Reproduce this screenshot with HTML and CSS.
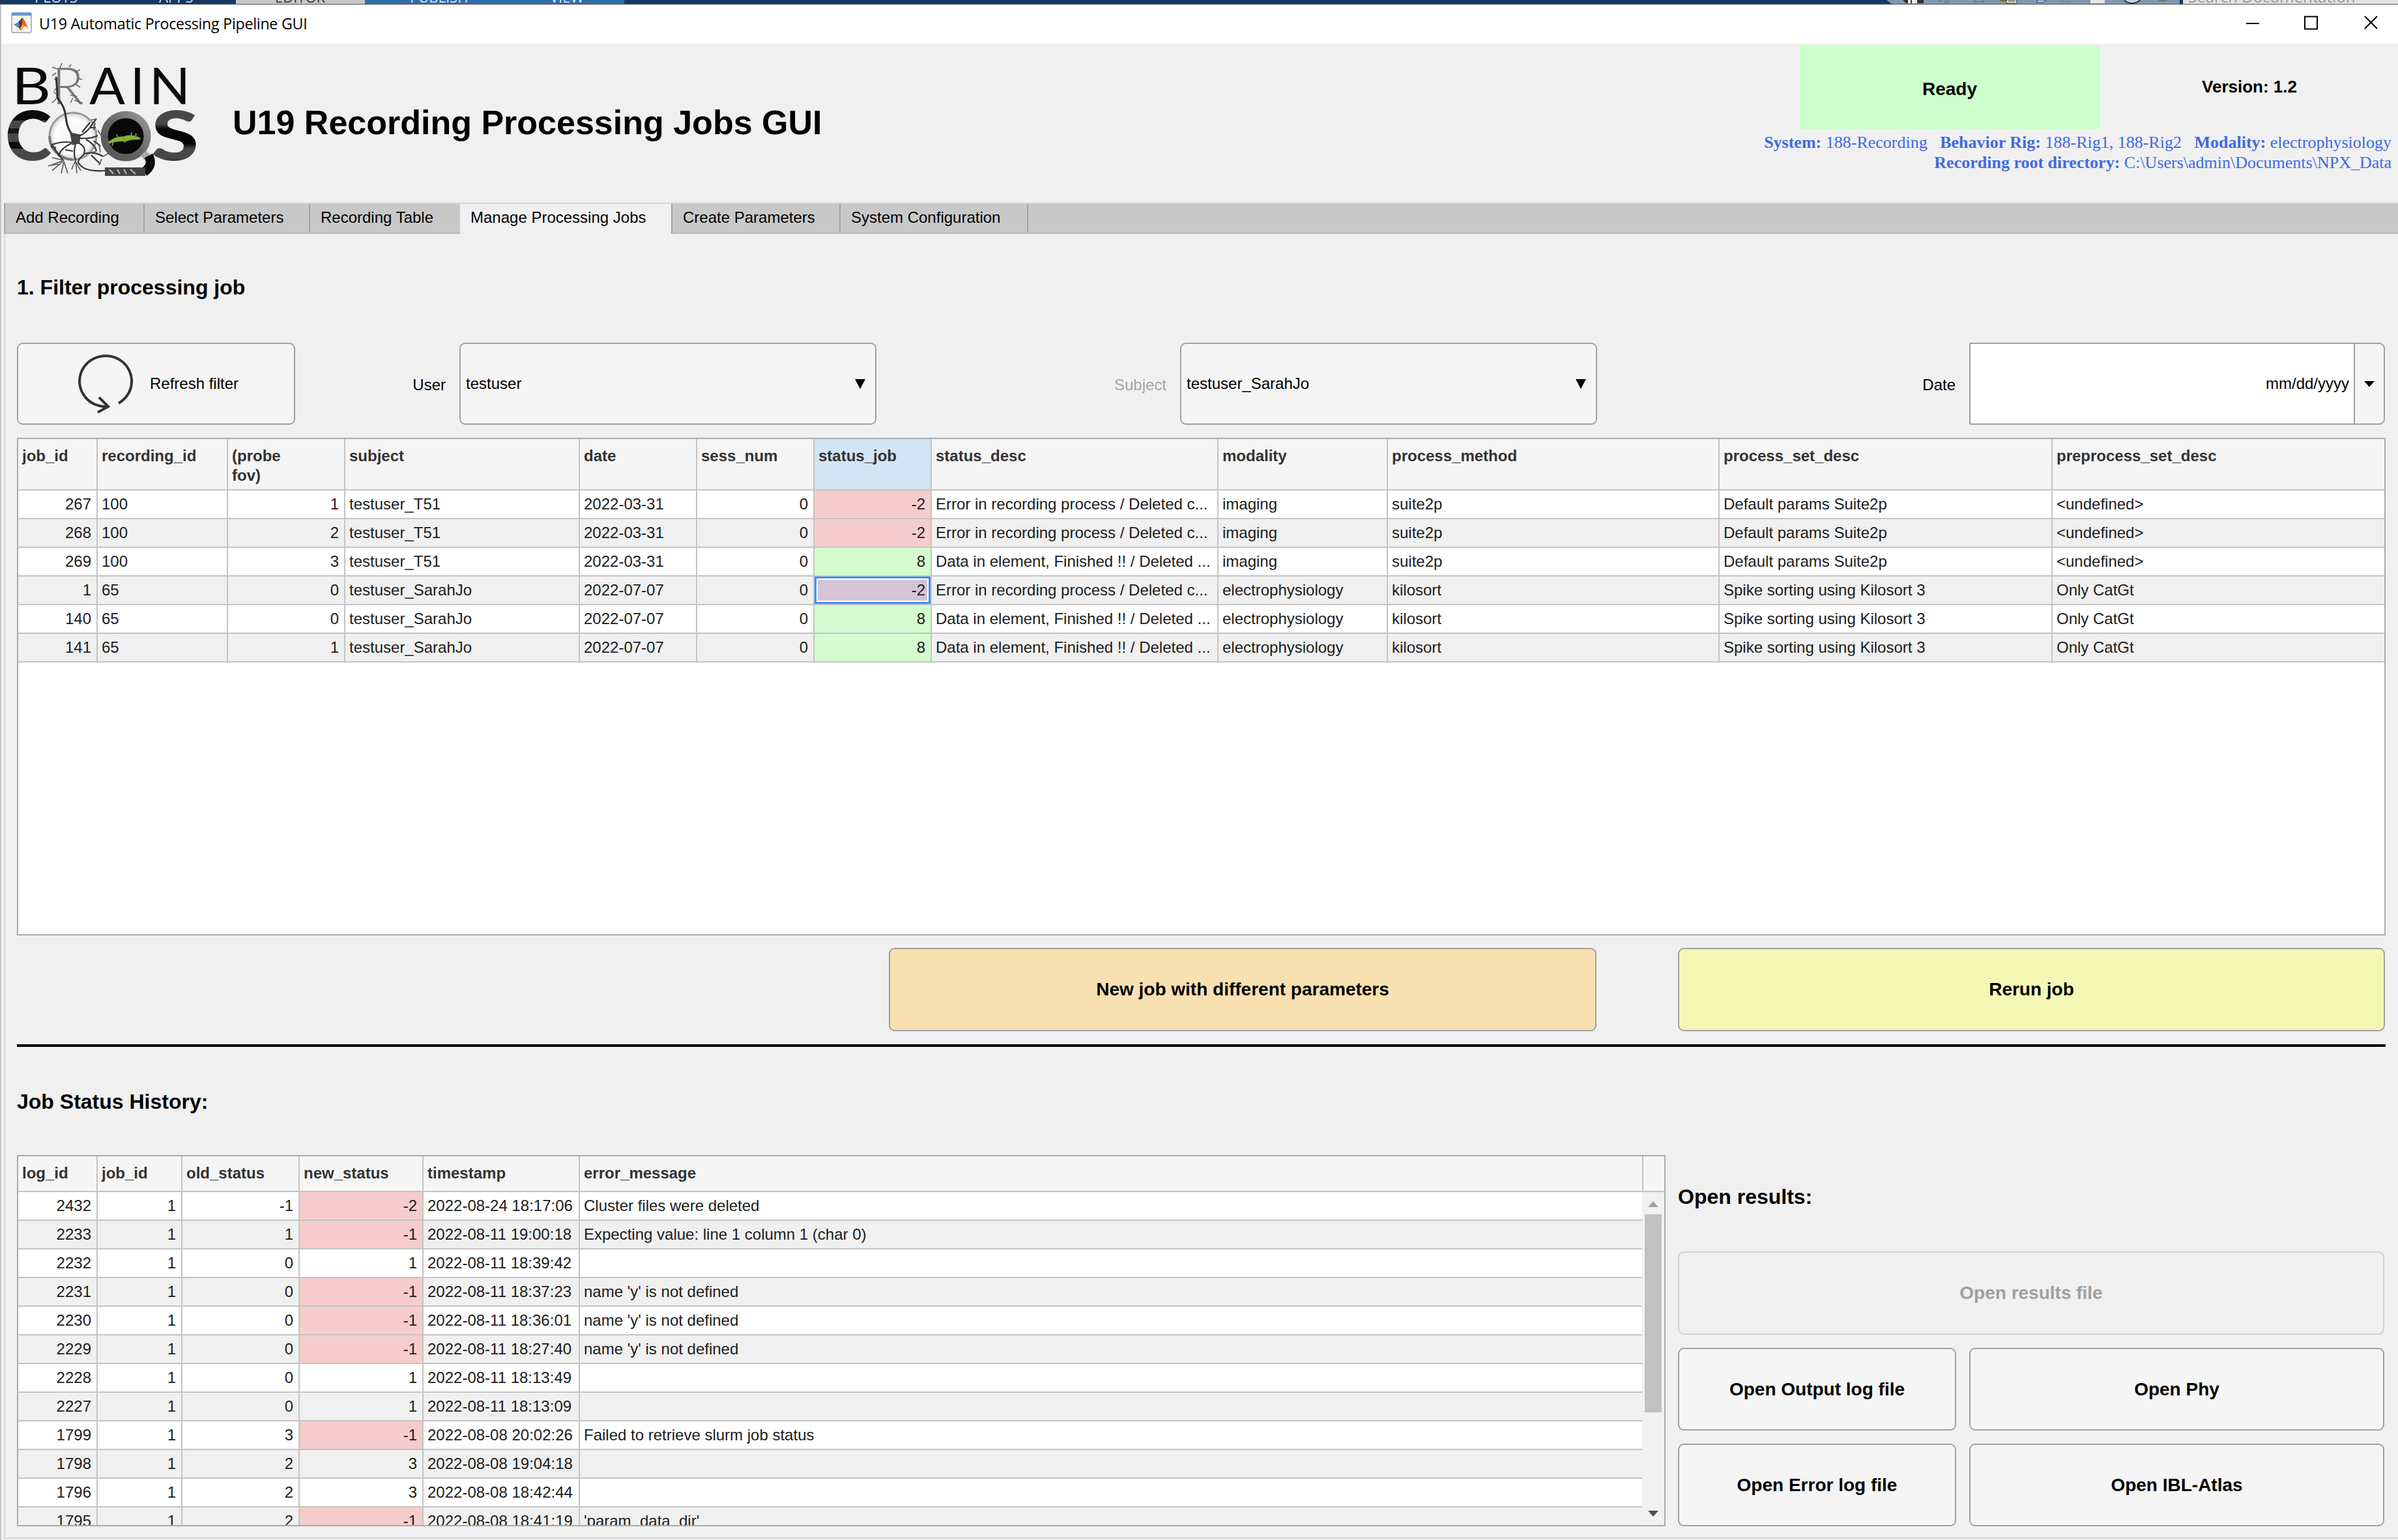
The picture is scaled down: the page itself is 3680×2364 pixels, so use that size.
FILE: index.html
```html
<!DOCTYPE html>
<html lang="en">
<head>
<meta charset="utf-8">
<title>U19 Automatic Processing Pipeline GUI</title>
<link rel="stylesheet" href="styles.css">
</head>
<body>
<div class="backdrop">
  <span class="bd bd-plots">PLOTS</span><span class="bd bd-apps">APPS</span><span class="bd bd-editor">EDITOR</span><span class="bd bd-publish">PUBLISH</span><span class="bd bd-view">VIEW</span><span class="bd bd-fill"></span>
  <svg class="bd-tools" width="455" height="6" viewBox="2895 0 455 6"><path d="M2895 0H3345V6H2903Z" fill="#8098b0"/><path d="M2920 0H2952V5H2925Z" fill="#333"/><path d="M2928 0h4v5h-4zM2934 0h8v5h-8z" fill="#e8e8e8"/><path d="M3030 0v3h14V0M2975 0q2 4 6 0M2985 0v4h5V0" fill="none" stroke="#6c8095" stroke-width="2"/><path d="M3068 0h12v2h-9z" fill="#7d6024"/><path d="M3079 0h16v5h-16z" fill="#e9efe6" stroke="#333"/><path d="M3082 2h10" stroke="#333"/><path d="M3126 0v4h9l6-4z" fill="#a8cdf5" stroke="#273f63"/><path d="M3162 0q4 4 14 3V0" fill="none" stroke="#6c8095"/><path d="M3208 0h22v5h-22z" fill="#e6e6e6"/><path d="M3260 0q4 5 12 5t12-5" fill="#c8d4e2" stroke="#222a3a" stroke-width="2"/><path d="M3310 0q8 5 18 0" fill="#777"/><path d="M3345 0h5v6h-5z" fill="#143865"/></svg>
  <span class="bd bd-search">Search Documentation</span>
</div>

<div class="window">
<div class="titlebar">
  <svg class="app-icon" width="32" height="32" viewBox="0 0 32 32"><rect x="1" y="1" width="30" height="30" rx="2" fill="#f2f4f6" stroke="#b4b8bc" stroke-width="2"/><rect x="1" y="0" width="30" height="5" fill="#6b9ac8"/><path d="M4 19L11 15L14 22L10 23Z" fill="#4a8fc4"/><path d="M11 15Q14 12 17 8L19 14L14 22Z" fill="#27406e"/><path d="M14 22Q17 11 18 8Q22 14 26 24L21 21L15 28L11 22Z" fill="#df6a1d"/><path d="M17 9Q16 18 11 22L15 28L17 24Z" fill="#8e2b18"/><path d="M18 18L21 21L15 28L14 24Z" fill="#f4ae3d"/></svg>
  <span class="window-title">U19 Automatic Processing Pipeline GUI</span>
  <svg class="window-buttons" width="206" height="22" viewBox="0 0 206 22" fill="none" stroke="#000" stroke-width="2"><path d="M1 12H21"/><rect x="91" y="1.5" width="19" height="19"/><path d="M183 1L202 20M202 1L183 20"/></svg>
</div>

<header class="header">
  <svg class="logo" width="310" height="190" viewBox="0 90 310 190">
    <defs>
      <linearGradient id="band-c" x1="0" y1="0" x2="0" y2="1"><stop offset="0" stop-color="#484848"/><stop offset=".2" stop-color="#484848"/><stop offset=".2" stop-color="#0a0a0a"/><stop offset=".34" stop-color="#0a0a0a"/><stop offset=".34" stop-color="#484848"/><stop offset=".43" stop-color="#484848"/><stop offset=".43" stop-color="#151515"/><stop offset=".5" stop-color="#151515"/><stop offset=".5" stop-color="#484848"/><stop offset=".6" stop-color="#484848"/><stop offset=".6" stop-color="#0a0a0a"/><stop offset=".68" stop-color="#0a0a0a"/><stop offset=".68" stop-color="#484848"/></linearGradient>
      <linearGradient id="band-s" x1="0" y1="0" x2="0" y2="1"><stop offset="0" stop-color="#484848"/><stop offset=".38" stop-color="#484848"/><stop offset=".44" stop-color="#050505"/><stop offset=".62" stop-color="#050505"/><stop offset=".68" stop-color="#484848"/><stop offset=".8" stop-color="#484848"/><stop offset=".86" stop-color="#111"/></linearGradient>
      <radialGradient id="cell"><stop offset="0" stop-color="#f4f4f4"/><stop offset=".75" stop-color="#fff"/><stop offset="1" stop-color="#d0d0d0"/></radialGradient>
      <linearGradient id="lens" x1="0" y1="1" x2="1" y2="0"><stop offset="0" stop-color="#555"/><stop offset=".5" stop-color="#666"/><stop offset="1" stop-color="#999"/></linearGradient>
    </defs>
    <g font-family="Lato, sans-serif" font-size="78" fill="#0a0a0a">
      <text x="18" y="160" textLength="60" lengthAdjust="spacingAndGlyphs">B</text>
      <text x="80" y="160" fill="#777" font-weight="300" textLength="48" lengthAdjust="spacingAndGlyphs">R</text>
      <text x="137" y="160" textLength="55" lengthAdjust="spacingAndGlyphs">A</text>
      <text x="200" y="160">I</text>
      <text x="229" y="160" textLength="63" lengthAdjust="spacingAndGlyphs">N</text>
    </g>
    <path d="M88 106l-8 -3M86 112l-6 4M90 122l-7 0M88 134l-5 5M92 104l3 -7M106 103l3 -4M116 110l7 -3M119 120l7 2M117 130l6 4M108 146l10 2M114 154l13 4M112 150l-4 8M88 150l-8 8M88 146l-6 -5" stroke="#666" stroke-width="1.6" fill="none"/>
    <text x="8" y="246" font-family="Lato, sans-serif" font-weight="900" font-size="104" fill="url(#band-c)" textLength="71" lengthAdjust="spacingAndGlyphs">C</text>
    <text x="232" y="246" font-family="Lato, sans-serif" font-weight="900" font-size="104" fill="url(#band-s)" textLength="73" lengthAdjust="spacingAndGlyphs">S</text>
    <circle cx="112" cy="209" r="36" fill="url(#cell)" stroke="#9a9a9a" stroke-width="3"/>
    <path d="M76 209A36 36 0 0 0 112 245" fill="none" stroke="#777" stroke-width="4"/>
    <path d="M86 118Q88 138 88 150Q100 164 101 180Q103 200 114 210" fill="none" stroke="#333" stroke-width="3"/>
    <path d="M109 205L122 208L121 219L112 221Z" fill="#444" stroke="#444" stroke-width="3"/>
    <g fill="none" stroke="#333" stroke-width="2.2">
      <path d="M112 219Q96 216 80 222Q88 236 98 247M110 220Q92 228 90 240M116 220Q112 236 116 246M120 219Q134 226 128 238Q116 248 122 252Q130 264 161 262M121 209Q134 204 142 190M122 212Q138 214 150 208M132 214Q146 222 148 232M126 203L138 188M142 190l6 -8M137 196l10 0M130 236Q144 232 158 240M140 238l14 14M144 216l10 8M100 230L112 232M86 227l-8 -2"/>
    </g>
    <path d="M98 246l-18 -4M96 247l-22 8M96 248l-16 14M98 248l-4 18M98 248l6 18M90 252l-14 2M116 246l-6 14M116 246l2 20M116 248l8 14M140 184l8 -1M146 188l-2 12M150 200l8 12M158 240l8 -4M156 244l-4 10M148 232l-12 4M152 222l2 12" fill="none" stroke="#555" stroke-width="1.6"/>
    <circle cx="193" cy="209" r="33" fill="#090909" stroke="url(#lens)" stroke-width="11"/>
    <path d="M167 219Q178 210 190 211Q200 206 215 213Q200 212 193 216Q182 214 167 219Z" fill="#83b33c" stroke="#83b33c" stroke-width="3"/>
    <path d="M174 217l-2 7M181 212l-2 -6M192 213l-1 6M201 210l1 -7M207 211l2 -6" stroke="#6d9a2e" stroke-width="2"/>
    <path d="M220 235L228 244" stroke="#aaa" stroke-width="12"/>
    <path d="M228 239Q236 254 221 264" fill="none" stroke="#0a0a0a" stroke-width="14"/>
    <rect x="161" y="257" width="62" height="13" fill="#444"/>
    <path d="M168 260l6 7M180 260l4 7M190 260l4 7M200 260l8 7" stroke="#bbb" stroke-width="2"/>
  </svg>
  <h1 class="app-title">U19 Recording Processing Jobs GUI</h1>
  <div class="header-info">
    <div class="status-line">
      <div class="status-ready">Ready</div>
      <div class="version">Version: 1.2</div>
    </div>
    <div class="system-info"><b>System:</b> 188-Recording &nbsp; <b>Behavior Rig:</b> 188-Rig1, 188-Rig2 &nbsp; <b>Modality:</b> electrophysiology<br><b>Recording root directory:</b> C:\Users\admin\Documents\NPX_Data</div>
  </div>
</header>

<nav class="tabs">
  <div class="tab tab-add">Add Recording</div>
  <div class="tab tab-select">Select Parameters</div>
  <div class="tab tab-table">Recording Table</div>
  <div class="tab tab-manage active">Manage Processing Jobs</div>
  <div class="tab tab-create">Create Parameters</div>
  <div class="tab tab-config">System Configuration</div>
</nav>

<main class="page">
  <h2 class="section-title">1. Filter processing job</h2>

  <div class="filters">
    <button class="button refresh"><svg width="86" height="92" viewBox="0 0 86 92" fill="none" stroke="#333" stroke-width="4"><path d="M64 76A40 39 0 1 0 48 81M34 67L48 81L32 90"/></svg><span>Refresh filter</span></button>
    <label class="filter-label">User</label>
    <div class="select"><span>testuser</span><svg width="16" height="15" viewBox="0 0 16 15"><path d="M0 0H16L8 15Z"/></svg></div>
    <label class="filter-label disabled">Subject</label>
    <div class="select"><span>testuser_SarahJo</span><svg width="16" height="15" viewBox="0 0 16 15"><path d="M0 0H16L8 15Z"/></svg></div>
    <label class="filter-label">Date</label>
    <div class="date"><div class="date-value">mm/dd/yyyy</div><div class="date-drop"><svg width="16" height="9" viewBox="0 0 16 9"><path d="M0 0H16L8 9Z"/></svg></div></div>
  </div>

  <div class="jobs">
    <table class="grid jobs-grid">
      <colgroup><col class="w122"><col class="w200"><col class="w180"><col class="w360"><col class="w180"><col class="w180"><col class="w180"><col class="w440"><col class="w260"><col class="w509"><col class="w511"><col class="w509"></colgroup>
      <thead><tr><th>job_id</th><th>recording_id</th><th>(probe<br>fov)</th><th>subject</th><th>date</th><th>sess_num</th><th class="picked">status_job</th><th>status_desc</th><th>modality</th><th>process_method</th><th>process_set_desc</th><th>preprocess_set_desc</th></tr></thead>
      <tbody>
      <tr><td class="num">267</td><td>100</td><td class="num">1</td><td>testuser_T51</td><td>2022-03-31</td><td class="num">0</td><td class="num bad">-2</td><td>Error in recording process / Deleted c...</td><td>imaging</td><td>suite2p</td><td>Default params Suite2p</td><td>&lt;undefined&gt;</td></tr>
      <tr><td class="num">268</td><td>100</td><td class="num">2</td><td>testuser_T51</td><td>2022-03-31</td><td class="num">0</td><td class="num bad">-2</td><td>Error in recording process / Deleted c...</td><td>imaging</td><td>suite2p</td><td>Default params Suite2p</td><td>&lt;undefined&gt;</td></tr>
      <tr><td class="num">269</td><td>100</td><td class="num">3</td><td>testuser_T51</td><td>2022-03-31</td><td class="num">0</td><td class="num good">8</td><td>Data in element, Finished !! / Deleted ...</td><td>imaging</td><td>suite2p</td><td>Default params Suite2p</td><td>&lt;undefined&gt;</td></tr>
      <tr><td class="num">1</td><td>65</td><td class="num">0</td><td>testuser_SarahJo</td><td>2022-07-07</td><td class="num">0</td><td class="num selected">-2</td><td>Error in recording process / Deleted c...</td><td>electrophysiology</td><td>kilosort</td><td>Spike sorting using Kilosort 3</td><td>Only CatGt</td></tr>
      <tr><td class="num">140</td><td>65</td><td class="num">0</td><td>testuser_SarahJo</td><td>2022-07-07</td><td class="num">0</td><td class="num good">8</td><td>Data in element, Finished !! / Deleted ...</td><td>electrophysiology</td><td>kilosort</td><td>Spike sorting using Kilosort 3</td><td>Only CatGt</td></tr>
      <tr><td class="num">141</td><td>65</td><td class="num">1</td><td>testuser_SarahJo</td><td>2022-07-07</td><td class="num">0</td><td class="num good">8</td><td>Data in element, Finished !! / Deleted ...</td><td>electrophysiology</td><td>kilosort</td><td>Spike sorting using Kilosort 3</td><td>Only CatGt</td></tr>
      </tbody>
    </table>
  </div>

  <div class="job-actions">
    <button class="button strong orange">New job with different parameters</button>
    <button class="button strong yellow">Rerun job</button>
  </div>

  <div class="divider"></div>

  <h2 class="section-title history-title">Job Status History:</h2>

  <div class="lower">
    <div class="log">
      <table class="grid log-grid">
        <colgroup><col class="w122"><col class="w130"><col class="w180"><col class="w190"><col class="w240"><col class="w1630"></colgroup>
        <thead><tr><th>log_id</th><th>job_id</th><th>old_status</th><th>new_status</th><th>timestamp</th><th>error_message</th></tr></thead>
        <tbody>
        <tr><td class="num">2432</td><td class="num">1</td><td class="num">-1</td><td class="num bad">-2</td><td>2022-08-24 18:17:06</td><td>Cluster files were deleted</td></tr>
        <tr><td class="num">2233</td><td class="num">1</td><td class="num">1</td><td class="num bad">-1</td><td>2022-08-11 19:00:18</td><td>Expecting value: line 1 column 1 (char 0)</td></tr>
        <tr><td class="num">2232</td><td class="num">1</td><td class="num">0</td><td class="num">1</td><td>2022-08-11 18:39:42</td><td></td></tr>
        <tr><td class="num">2231</td><td class="num">1</td><td class="num">0</td><td class="num bad">-1</td><td>2022-08-11 18:37:23</td><td>name 'y' is not defined</td></tr>
        <tr><td class="num">2230</td><td class="num">1</td><td class="num">0</td><td class="num bad">-1</td><td>2022-08-11 18:36:01</td><td>name 'y' is not defined</td></tr>
        <tr><td class="num">2229</td><td class="num">1</td><td class="num">0</td><td class="num bad">-1</td><td>2022-08-11 18:27:40</td><td>name 'y' is not defined</td></tr>
        <tr><td class="num">2228</td><td class="num">1</td><td class="num">0</td><td class="num">1</td><td>2022-08-11 18:13:49</td><td></td></tr>
        <tr><td class="num">2227</td><td class="num">1</td><td class="num">0</td><td class="num">1</td><td>2022-08-11 18:13:09</td><td></td></tr>
        <tr><td class="num">1799</td><td class="num">1</td><td class="num">3</td><td class="num bad">-1</td><td>2022-08-08 20:02:26</td><td>Failed to retrieve slurm job status</td></tr>
        <tr><td class="num">1798</td><td class="num">1</td><td class="num">2</td><td class="num">3</td><td>2022-08-08 19:04:18</td><td></td></tr>
        <tr><td class="num">1796</td><td class="num">1</td><td class="num">2</td><td class="num">3</td><td>2022-08-08 18:42:44</td><td></td></tr>
        <tr><td class="num">1795</td><td class="num">1</td><td class="num">2</td><td class="num bad">-1</td><td>2022-08-08 18:41:19</td><td>'param_data_dir'</td></tr>
        </tbody>
      </table>
      <div class="scroll">
        <div class="scroll-head"></div>
        <div class="scroll-track">
          <svg width="16" height="9" viewBox="0 0 16 9"><path d="M0 9H16L8 0Z" fill="#a3a3a3"/></svg>
          <div class="scroll-thumb"></div>
          <svg width="16" height="9" viewBox="0 0 16 9"><path d="M0 0H16L8 9Z" fill="#505050"/></svg>
        </div>
      </div>
    </div>
    <section class="results">
      <h2 class="section-title results-title">Open results:</h2>
      <div class="results-buttons">
        <button class="button strong wide" disabled>Open results file</button>
        <button class="button strong">Open Output log file</button>
        <button class="button strong">Open Phy</button>
        <button class="button strong">Open Error log file</button>
        <button class="button strong">Open IBL-Atlas</button>
      </div>
    </section>
  </div>
</main>
</div>
</body>
</html>
```

FILE: styles.css
```css
* { box-sizing: border-box; }

html, body { height: 2364px; overflow: hidden; }

body {
  margin: 0;
  width: 3680px;
  background: #f0f0f0;
  color: #000;
  font: 24px/30px "Liberation Sans", Arial, sans-serif;
}

/* Strip of the window behind */
.backdrop {
  display: flex;
  height: 7px;
  overflow: hidden;
  background: #143865;
  border-bottom: 1px solid #555;
}
.bd {
  flex: none;
  height: 30px;
  margin-top: -20px;
  color: #dde3ea;
  font: 22px/30px "Open Sans", sans-serif;
}
.bd-plots { width: 244px; padding-left: 53px; }
.bd-apps { width: 118px; }
.bd-editor { width: 198px; padding-left: 60px; color: #333; background: #c8c8c8; }
.bd-publish { width: 284px; padding-left: 69px; background: #2f6eac; }
.bd-view { width: 114px; background: #2f6eac; }
.bd-fill { width: 1937px; }
.bd-tools { flex: none; display: block; }
.bd-search { width: 330px; padding-left: 8px; color: #999; background: #e2e2e2; font-size: 24px; white-space: nowrap; }

.window { height: 2357px; border-left: 2px solid #c4c4c4; background: #f0f0f0; }

.titlebar {
  display: flex;
  align-items: center;
  height: 60px;
  padding: 0 28px 0 15px;
  background: #fff;
}
.app-icon { margin-top: -4px; }
.window-title {
  margin: -3px 0 0 11px;
  font: 23.2px/30px "Open Sans", sans-serif;
  letter-spacing: -0.25px;
  white-space: nowrap;
}
.window-buttons { margin: -5px 0 0 auto; }

.header { display: flex; height: 244px; }
.logo { flex: none; margin: 23px 0 0 -2px; }
.app-title {
  margin: 90px 0 0 47px;
  font-size: 52px;
  line-height: 62px;
  font-weight: bold;
  white-space: nowrap;
}
.header-info { width: 1000px; margin-left: auto; padding: 3px 10px 0 0; }
.status-line { display: flex; justify-content: flex-end; height: 128px; }
.status-ready {
  width: 460px;
  padding-top: 3px;
  background: #ccffcc;
  font-size: 28px;
  font-weight: bold;
  line-height: 128px;
  text-align: center;
}
.version { width: 448px; padding-right: -10px; font-size: 26px; font-weight: bold; line-height: 126px; text-align: center; text-indent: 12px; }
.system-info {
  margin-top: 5px;
  color: #4169e1;
  font: 26px/31px "Liberation Serif", "Times New Roman", serif;
  text-align: right;
  white-space: nowrap;
}

.tabs {
  display: flex;
  height: 48px;
  margin-left: 4px;
  background: #c8c8c8;
  border-top: 2px solid #d4d4d4;
  border-bottom: 2px solid #b8b8b8;
  border-left: 2px solid #a8a8a8;
}
.tab { height: 44px; padding-left: 16px; border-right: 2px solid #a4a4a4; line-height: 42px; white-space: nowrap; }
.tab-add { width: 214px; }
.tab-select { width: 254px; }
.tab-table { width: 230px; border-right: 0; }
.tab-manage { width: 326px; }
.tab-create { width: 258px; }
.tab-config { width: 288px; }
.tab.active { height: 46px; background: #f0f0f0; }

.page {
  height: 2003px;
  margin-left: 4px;
  padding: 62px 19px 0 18px;
  border-left: 2px solid #d8d8d8;
  border-bottom: 2px solid #d8d8d8;
}

.section-title { margin: 0; height: 40px; font-size: 32px; line-height: 40px; font-weight: bold; white-space: nowrap; }

.button {
  display: flex;
  align-items: center;
  justify-content: center;
  padding: 0;
  border: 2px solid #a0a0a0;
  border-radius: 9px;
  background: #f5f5f5;
  color: #000;
  font: 24px/30px "Liberation Sans", Arial, sans-serif;
}
.button.strong { font-size: 28px; font-weight: bold; }
.button:disabled { background: #f0f0f0; border-color: #d2d2d2; color: #a0a0a0; }
.button.orange { background: #f9e0b0; }
.button.yellow { background: #f2f8b4; }

.filters {
  display: grid;
  grid-template-columns: 427px 252px 640px 466px 640px 571px 638px;
  height: 126px;
  margin-top: 65px;
}
.refresh { gap: 26px; justify-content: flex-start; padding-left: 90px; }
.filter-label { padding: 50px 21px 0 0; text-align: right; }
.filter-label.disabled { color: #a6a6a6; }
.select {
  display: flex;
  align-items: center;
  justify-content: space-between;
  padding: 0 15px 0 8px;
  border: 2px solid #a0a0a0;
  border-radius: 9px;
  background: #f5f5f5;
}
.date { display: flex; border: 2px solid #a0a0a0; border-radius: 2px 9px 9px 2px; background: #f5f5f5; overflow: hidden; }
.date-value { width: 590px; padding-right: 7px; background: #fff; border-right: 2px solid #a0a0a0; line-height: 122px; text-align: right; }
.date-drop { display: flex; flex: 1; align-items: center; justify-content: center; }

/* Data tables */
.jobs { height: 764px; margin-top: 20px; border: 2px solid #ababab; background: #fff; }
.grid { table-layout: fixed; border-spacing: 0; }
.grid th, .grid td {
  padding: 0 8px 0 6px;
  border-right: 2px solid #c4c4c4;
  border-bottom: 2px solid #c4c4c4;
  overflow: hidden;
  text-align: left;
  white-space: nowrap;
}
.grid th { background: #f5f5f5; color: #333; vertical-align: top; }
.grid td { height: 44px; color: #1c1c1c; }
.grid th:last-child, .grid td:last-child { border-right: 0; }
.grid tbody tr { background: #fff; }
.grid tbody tr:nth-child(even) { background: #f0f0f0; }
.grid .num { text-align: right; }
.grid .bad { background: #f6cccc; }
.grid .good { background: #d4fccf; }
.grid .picked { background: #d3e5f4; }
.grid .selected { background: #d4c4d4; box-shadow: inset 0 0 0 3px #3c94f7, inset 0 0 0 5px #fff; }
.jobs-grid { width: 3631px; }
.jobs-grid th { height: 79px; padding-top: 11px; }
.log-grid { width: 2492px; flex: none; }
.log-grid th { height: 55px; padding-top: 11px; }

.w122 { width: 122px; }
.w130 { width: 130px; }
.w180 { width: 180px; }
.w190 { width: 190px; }
.w200 { width: 200px; }
.w240 { width: 240px; }
.w260 { width: 260px; }
.w360 { width: 360px; }
.w440 { width: 440px; }
.w509 { width: 509px; }
.w511 { width: 511px; }
.w1630 { width: 1630px; }

.job-actions {
  display: grid;
  grid-template-columns: 1086px 1085px;
  gap: 125px;
  height: 128px;
  margin: 19px 0 0 1338px;
}
.divider { height: 4px; margin-top: 20px; background: #000; }
.history-title { margin-top: 64px; }

.lower { display: grid; grid-template-columns: 2530px 1084px; gap: 19px; height: 570px; margin-top: 62px; }
.log { display: flex; align-items: flex-start; height: 570px; overflow: hidden; border: 2px solid #ababab; background: #fff; }
.scroll { display: flex; flex-direction: column; flex: 1; height: 566px; }
.scroll-head { height: 55px; background: #f5f5f5; border-left: 2px solid #c4c4c4; border-bottom: 2px solid #c4c4c4; }
.scroll-track { display: flex; flex: 1; flex-direction: column; align-items: center; padding: 14px 0 13px; background: #f1f1f1; }
.scroll-thumb { width: 26px; height: 304px; margin: 11px 0 auto; background: #c1c1c1; }

.results-title { margin-top: 44px; }
.results-buttons {
  display: grid;
  grid-template-columns: 427px 637px;
  grid-template-rows: 128px 127px 127px;
  gap: 20px;
  margin-top: 64px;
}
.wide { grid-column: 1 / 3; }
```
